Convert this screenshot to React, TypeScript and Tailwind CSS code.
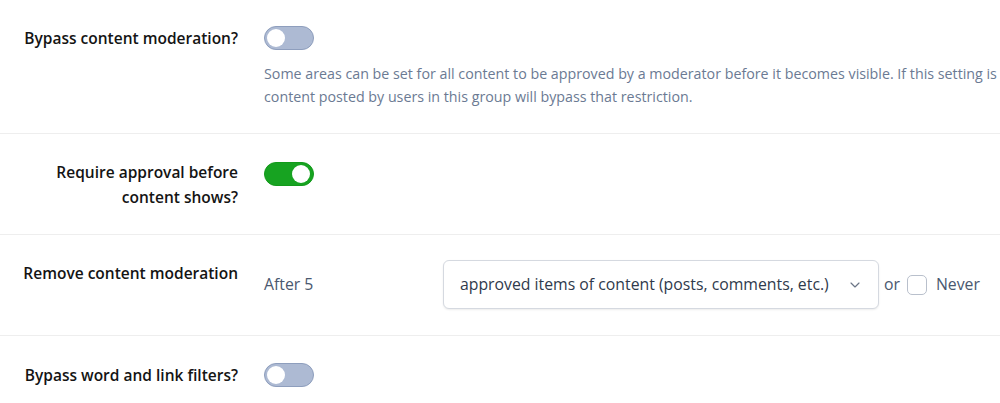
import { ChevronDown } from 'lucide-react'

const font = { fontFamily: '"Open Sans", "Noto Sans", sans-serif' }

function Toggle({ on }: { on: boolean }) {
  return (
    <div
      className={
        on
          ? 'flex h-6 w-[50px] items-center justify-end rounded-full border border-[#139a1b] bg-[#17a321] px-[3px]'
          : 'flex h-6 w-[50px] items-center justify-start rounded-full border border-[#8e9ebd] bg-[#adbad3] px-[2px]'
      }
    >
      <span className="h-[18px] w-[18px] rounded-full bg-white" />
    </div>
  )
}

function Label({ children, className = '' }: { children: React.ReactNode; className?: string }) {
  return (
    <div className={'w-[238px] shrink-0 text-right text-[15.5px] font-semibold text-[#141414] ' + className}>
      {children}
    </div>
  )
}

export default function App() {
  return (
    <div className="w-[1000px] overflow-hidden bg-white" style={font}>
      <div className="flex gap-[26px] border-b border-[#eeeeee] pt-[26px] pb-[25px]">
        <Label className="leading-6">Bypass content moderation?</Label>
        <div className="min-w-0 flex-1">
          <Toggle on={false} />
          <p className="mt-3 whitespace-nowrap text-[14.25px] leading-[23px] text-[#6b7a93]">
            Some areas can be set for all content to be approved by a moderator before it becomes visible. If this setting is
            <br />
            content posted by users in this group will bypass that restriction.
          </p>
        </div>
      </div>

      <div className="flex gap-[26px] border-b border-[#eeeeee] pt-[26px] pb-[24px]">
        <Label className="leading-[25px]">
          Require approval before
          <br />
          content shows?
        </Label>
        <div className="pt-[2px]">
          <Toggle on={true} />
        </div>
      </div>

      <div className="flex gap-[26px] border-b border-[#eeeeee] pt-[25px] pb-[26px]">
        <Label className="pt-[1px] leading-6">Remove content moderation</Label>
        <div className="flex items-center">
          <span className="w-[179px] text-[15.8px] text-[#4a586f]">After 5</span>
          <div className="flex h-[49px] w-[436px] items-center justify-between rounded-md border border-[#d5d9e0] bg-white pr-[15px] pl-[16px] text-[15.8px] text-[#2f3a4c] shadow-[0_1px_2px_rgba(0,0,0,0.08)]">
            <span>approved items of content (posts, comments, etc.)</span>
            <ChevronDown size={16} strokeWidth={1.75} className="text-[#6b7586]" />
          </div>
          <span className="ml-[5px] text-[15.8px] text-[#4a586f]">or</span>
          <span className="ml-[7px] h-5 w-5 rounded-[5px] border border-[#b9c0cc] bg-white" />
          <span className="ml-[9px] text-[15.8px] text-[#4a586f]">Never</span>
        </div>
      </div>

      <div className="flex gap-[26px] pt-[27px] pb-[20px]">
        <Label className="leading-6">Bypass word and link filters?</Label>
        <Toggle on={false} />
      </div>
    </div>
  )
}
